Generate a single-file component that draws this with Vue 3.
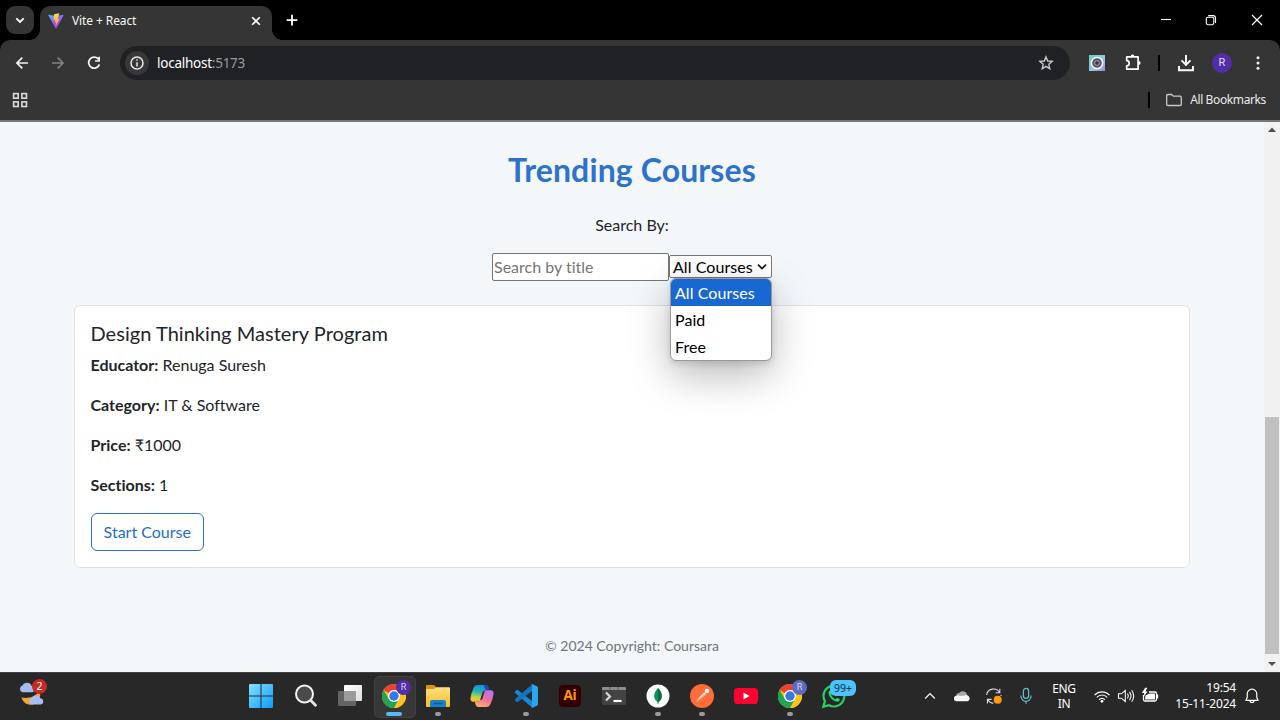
<script setup>
const options = ['All Courses', 'Paid', 'Free']
const details = [
  { label: 'Educator:', value: 'Renuga Suresh' },
  { label: 'Category:', value: 'IT & Software' },
  { label: 'Price:', value: '₹1000' },
  { label: 'Sections:', value: '1' }
]
</script>

<template>
  <div class="screen">
    <header class="browser">
      <div class="tabstrip">
        <div class="tabsearch">
          <svg width="28" height="28" viewBox="0 0 28 28"><path d="M10.3 12.3l3.7 3.6 3.7-3.6" fill="none" stroke="#fff" stroke-width="1.8" /></svg>
        </div>
        <div class="tab">
          <svg class="vite" width="16" height="16" viewBox="0 0 16 16">
            <defs>
              <linearGradient id="vg" x1="0" y1="0" x2=".6" y2="1"><stop offset="0" stop-color="#41c8ff" /><stop offset=".45" stop-color="#8b6cff" /><stop offset="1" stop-color="#b72be8" /></linearGradient>
              <linearGradient id="vb" x1="0" y1="0" x2="0" y2="1"><stop offset="0" stop-color="#ffdf4a" /><stop offset="1" stop-color="#ff9d10" /></linearGradient>
            </defs>
            <path d="M.1 1.7L8 3.1l7.9-1.4L8.4 15.4q-.4.6-.8 0z" fill="url(#vg)" />
            <path d="M11.3.2L6 1.2 5.6 7.2l1.8-.4-.5 2.7 1.3-.4-.7 4.4 3.9-7.5-1.8.3z" fill="url(#vb)" />
          </svg>
          <span class="tabtitle">Vite + React</span>
          <svg class="tabclose" width="16" height="16" viewBox="0 0 16 16"><path d="M4.2 4.2l7.6 7.6M11.8 4.2l-7.6 7.6" stroke="#fff" stroke-width="1.6" /></svg>
        </div>
        <div class="newtab">
          <svg width="20" height="20" viewBox="0 0 20 20"><path d="M10 4.8v10.6M4.7 10.1h10.6" stroke="#fff" stroke-width="1.8" /></svg>
        </div>
        <div class="wincontrols">
          <svg width="46" height="40" viewBox="0 0 46 40"><path d="M19 19.5h10" stroke="#fff" stroke-width="1.1" /></svg>
          <svg width="46" height="40" viewBox="0 0 46 40"><g fill="none" stroke="#fff" stroke-width="1.1"><rect x="18.3" y="17.2" width="7.5" height="7.5" rx="1.6" /><path d="M20.2 15.6h4.9a2.4 2.4 0 012.4 2.4v5" /></g></svg>
          <svg width="46" height="40" viewBox="0 0 46 40"><path d="M18 15l10 10M28 15L18 25" stroke="#fff" stroke-width="1.2" /></svg>
        </div>
      </div>

      <div class="toolbar">
        <div class="cell"><svg width="20" height="20" viewBox="0 0 20 20"><path d="M16 10H4.9M10.3 4.6L4.9 10l5.4 5.4" fill="none" stroke="#f1f1f1" stroke-width="1.7" /></svg></div>
        <div class="cell"><svg width="20" height="20" viewBox="0 0 20 20"><path d="M4 10h11.1M9.7 4.6l5.4 5.4-5.4 5.4" fill="none" stroke="#858585" stroke-width="1.5" /></svg></div>
        <div class="cell"><svg width="20" height="20" viewBox="0 0 20 20"><path d="M14.7 6.5A5.5 5.5 0 1015.4 11.4" fill="none" stroke="#f1f1f1" stroke-width="1.8" /><path d="M16 3.8v5h-5V7.2h3.2V3.8z" fill="#f1f1f1" /></svg></div>
        <div class="omnibox">
          <div class="info"><svg width="24" height="24" viewBox="0 0 24 24"><circle cx="12" cy="12" r="6" fill="none" stroke="#e8e8e8" stroke-width="1.5" /><path d="M12 11.2v4.2M12 8.3v1.5" stroke="#e8e8e8" stroke-width="1.5" /></svg></div>
          <span class="url">localhost<span class="port">:5173</span></span>
          <svg class="star" width="20" height="20" viewBox="0 0 20 20"><path d="M10 3.9l1.7 4.1 4.5.4-3.4 2.900 1 4.400-3.800-2.300-3.800 2.300 1-4.400-3.400-2.900 4.500-.4z" fill="none" stroke="#c9c9c9" stroke-width="1.4" /></svg>
        </div>
        <div class="cell">
          <svg width="16" height="16" viewBox="0 0 16 16">
            <defs><linearGradient id="eg" x1="0" y1="0" x2="1" y2="1"><stop offset="0" stop-color="#68cfb8" /><stop offset=".55" stop-color="#8fc9dc" /><stop offset="1" stop-color="#9a8ce8" /></linearGradient></defs>
            <rect width="16" height="16" fill="url(#eg)" /><circle cx="8" cy="8" r="6.3" fill="#fff" /><circle cx="8" cy="8" r="4.8" fill="#58546c" /><circle cx="8" cy="8" r="3.1" fill="#88829f" /><circle cx="8" cy="8" r="1.7" fill="#38334c" />
          </svg>
        </div>
        <div class="cell"><svg width="20" height="20" viewBox="0 0 20 20"><path d="M4.100 3.900H15.100V16.200H3.700V12.900c3.400-.1 3.400-5 0-5.200V4.100z" fill="none" stroke="#fff" stroke-width="1.7" stroke-linejoin="round" /><path d="M7.600 3.400a1.900 1.900 0 013.800 0zM15.500 7.900a2.100 2.100 0 010 4.200z" fill="#fff" /></svg></div>
        <span class="divider tooldivider"></span>
        <div class="cell"><svg width="20" height="20" viewBox="0 0 20 20"><path d="M10 2v9.6M5.5 7.4L10 11.8l4.5-4.4M3 13v4.3h14V13" fill="none" stroke="#fff" stroke-width="1.9" /></svg></div>
        <div class="cell"><span class="avatar">R</span></div>
        <div class="cell"><svg width="20" height="20" viewBox="0 0 20 20"><g fill="#f1f1f1"><circle cx="10" cy="4.8" r="1.5" /><circle cx="10" cy="10" r="1.5" /><circle cx="10" cy="15.2" r="1.5" /></g></svg></div>
      </div>

      <div class="bookmarks">
        <svg width="16" height="16" viewBox="0 0 16 16"><g fill="none" stroke="#d9dedb" stroke-width="1.6"><rect x="1.6" y="1.6" width="4.600" height="4.600" /><rect x="9.9" y="1.6" width="4.600" height="4.600" /><rect x="1.6" y="9.9" width="4.600" height="4.600" /><rect x="9.9" y="9.9" width="4.600" height="4.600" /></g></svg>
        <span class="divider bookdivider"></span>
        <svg width="16" height="16" viewBox="0 0 16 16"><path d="M1.9 2.5h3.8l1.6 1.7h6.8q1.2 0 1.2 1.2v6.9q0 1.2-1.2 1.2H1.9Q.7 13.5.7 12.3V3.7q0-1.2 1.2-1.2z" fill="none" stroke="#c7c7c7" stroke-width="1.3" /></svg>
        <span class="booktext">All Bookmarks</span>
      </div>
    </header>

    <div class="viewport">
      <main class="page">
        <h2>Trending Courses</h2>
        <p class="searchby">Search By:</p>
        <div class="filters">
          <div class="input">Search by title</div>
          <div class="select">
            <span>All Courses</span>
            <svg width="12" height="12" viewBox="0 0 12 12"><path d="M2 3.6l4 4 4-4" fill="none" stroke="#111" stroke-width="1.6" /></svg>
            <ul class="menu">
              <li v-for="(o, i) in options" :key="o" :class="{ active: i === 0 }">{{ o }}</li>
            </ul>
          </div>
        </div>
        <section class="card">
          <h5>Design Thinking Mastery Program</h5>
          <p v-for="d in details" :key="d.label"><strong>{{ d.label }}</strong> {{ d.value }}</p>
          <div class="btn">Start Course</div>
        </section>
        <footer>© 2024 Copyright: Coursara</footer>
      </main>
      <aside class="scrollbar">
        <svg width="16" height="17" viewBox="0 0 16 17"><path d="M4 10l4-4.5 4 4.5z" fill="#505050" /></svg>
        <div class="track"><div class="thumb"></div></div>
        <svg width="16" height="17" viewBox="0 0 16 17"><path d="M4 7l4 4 4-4z" fill="#505050" /></svg>
      </aside>
    </div>

    <div class="taskbar">
      <div class="weather">
        <svg width="30" height="32" viewBox="0 0 30 32">
          <path d="M2.5 18.5c6 1.5 15-.5 17.5-7 3.8 7-2 14.8-9 14.3-4.500-.4-7-3-8.500-7.300z" fill="#f6a13a" />
          <path d="M3.500 13.200a3.400 3.400 0 010-6.600 4.900 4.900 0 019 .2 3.300 3.300 0 011 6.400z" fill="#a8bbef" />
          <path d="M12.500 25.500a3.400 3.400 0 01.2-6.500 4.500 4.500 0 018.300.2 3.200 3.200 0 01.8 6.300z" fill="#a6c0f4" />
        </svg>
        <span class="badge">2</span>
      </div>

      <div class="apps">
        <div class="app start">
          <svg width="24" height="24" viewBox="0 0 24 24">
            <defs><linearGradient id="wg" gradientUnits="userSpaceOnUse" x1="0" y1="0" x2="24" y2="24"><stop offset="0" stop-color="#85e2ff" /><stop offset="1" stop-color="#0a9bff" /></linearGradient></defs>
            <path d="M0 1q0-1 1-1h10.500v11.500H0zM12.500 0H23q1 0 1 1v10.500H12.500zM0 12.500h11.500V24H1q-1 0-1-1zM12.500 12.500H24V23q0 1-1 1H12.500z" fill="url(#wg)" />
          </svg>
        </div>
        <div class="app">
          <svg width="24" height="24" viewBox="0 0 24 24"><circle cx="10.500" cy="10" r="8.500" fill="#4a4a4a" stroke="#f3f3f3" stroke-width="2" /><path d="M16.800 16.500l4.700 4.800" stroke="#e0e5e8" stroke-width="2.800" stroke-linecap="round" /></svg>
        </div>
        <div class="app">
          <svg width="24" height="24" viewBox="0 0 24 24">
            <defs><linearGradient id="tg" x1="0" y1="0" x2="1" y2="1"><stop offset="0" stop-color="#fff" /><stop offset="1" stop-color="#dedede" /></linearGradient></defs>
            <rect x="6" y="1" width="18" height="16" rx="1" fill="url(#tg)" /><rect x="0" y="7" width="18" height="15" rx="1" fill="#6a6a6a" fill-opacity=".9" /><rect x="6" y="7" width="12" height="10" fill="#9b9b9b" />
          </svg>
        </div>
        <div class="app focused">
          <svg width="24" height="24" viewBox="0 0 24 24">
            <g id="chrome-logo"><circle cx="12" cy="12" r="12" fill="#fbbc16" /><path d="M12 12L1.600 6A12 12 0 0122.400 6H12z" fill="#ea4335" /><path d="M1.600 6A12 12 0 0012 24l5.200-9L12 18 6.800 15z" fill="#22a452" /><path d="M22.400 6A12 12 0 0112 24l5.200-9L18 12 12 6z" fill="#fcc31e" /><circle cx="12" cy="12" r="6" fill="#fff" /><circle cx="12" cy="12" r="4.700" fill="#3478e5" /></g>
          </svg>
          <span class="profile">R</span><i class="indicator wide"></i>
        </div>
        <div class="app">
          <svg width="24" height="24" viewBox="0 0 24 24">
            <defs><linearGradient id="fg" x1="0" y1="0" x2="0" y2="1"><stop offset="0" stop-color="#ffe181" /><stop offset="1" stop-color="#f7bd27" /></linearGradient></defs>
            <path d="M0 2q0-1 1-1h7l2.500 2.500V8H0z" fill="#d99415" /><path d="M1 5h7l2.500-1.700H23q1 0 1 1V22q0 1-1 1H1q-1 0-1-1V6q0-1 1-1z" fill="url(#fg)" /><path d="M4 23v-5q0-2 2-2h12q2 0 2 2v5z" fill="#1482cf" /><path d="M8 19.500h8" stroke="#0b5b9b" stroke-width="1.500" stroke-linecap="round" />
          </svg><i class="indicator"></i>
        </div>
        <div class="app">
          <svg width="24" height="24" viewBox="0 0 24 24">
            <defs>
              <linearGradient id="ca" x1=".5" y1="0" x2=".35" y2="1"><stop offset="0" stop-color="#168ce9" /><stop offset=".4" stop-color="#22b5b0" /><stop offset=".75" stop-color="#c6d341" /><stop offset="1" stop-color="#ffba30" /></linearGradient>
              <linearGradient id="cb" x1=".7" y1="0" x2=".3" y2="1"><stop offset="0" stop-color="#bc70f2" /><stop offset=".5" stop-color="#f1709f" /><stop offset="1" stop-color="#ffac66" /></linearGradient>
            </defs>
            <path d="M7.500 1h8.200q2 0 2.600 2l.8 3h-3.200q-1.500 0-2 1.700l-2.200 7.500q-.8 2.500-3.400 2.500H3.200Q0 17.700.5 13.800 1 9.500 3.500 4 4.700 1 7.500 1z" fill="url(#ca)" />
            <path d="M13.800 1h1.900q2 0 2.600 2l.8 3h-3.500z" fill="#1947b9" />
            <path d="M16.500 23H8.300q-2 0-2.600-2l-.8-3h3.200q1.500 0 2-1.700l2.200-7.500q.8-2.500 3.400-2.500h5.100Q24 6.300 23.500 10.200 23 14.500 20.500 20 19.300 23 16.500 23z" fill="url(#cb)" />
            <path d="M10.100 16.300l2.200-7.500q.6-2 2.600-2.400l-2.300 8.200q-.6 1.700-2.500 1.700z" fill="#37302f" />
          </svg>
        </div>
        <div class="app">
          <svg width="24" height="24" viewBox="0 0 24 24"><path d="M1.200 7.300l1.400-1.200q.6-.4 1.200 0L18 17v6.500L.9 8.700q-.5-.7.3-1.400z" fill="#1688d5" /><path d="M1.200 16.700l1.400 1.200q.6.400 1.200 0L18 7V.5L.9 15.300q-.5.700.3 1.400z" fill="#1175bd" /><path d="M17.300.2Q18 0 18.500.2l4.700 2.300q.8.400.8 1.300v16.400q0 .9-.8 1.300l-4.700 2.300q-.6.300-1.200 0 .7-.3.700-1.300V1.500q0-1-.7-1.300z" fill="#2ca5f0" /></svg><i class="indicator"></i>
        </div>
        <div class="app"><span class="ai">Ai</span></div>
        <div class="app">
          <svg width="24" height="24" viewBox="0 0 24 24"><rect y="3" width="24" height="18" rx="1" fill="#434343" /><path d="M0 6V4q0-1 1-1h22q1 0 1 1v2z" fill="#8d8d8d" /><path d="M8 3v3M16 3v3" stroke="#5b5b5b" /><path d="M4 8.500l4 4-4 4" fill="none" stroke="#d8d8d8" stroke-width="2.200" /><path d="M11.500 17h8" stroke="#fff" stroke-width="2.200" /></svg>
        </div>
        <div class="app">
          <svg width="24" height="24" viewBox="0 0 24 24"><circle cx="12" cy="12" r="11.500" fill="#fafafa" /><path d="M12 4c2.400 2.600 3.800 5.100 3.800 8 0 2.800-1.400 4.800-3.800 6.400C9.600 16.800 8.200 14.800 8.200 12c0-2.900 1.400-5.400 3.800-8z" fill="#10935a" /><path d="M12 4c2.400 2.600 3.800 5.100 3.800 8 0 2.800-1.400 4.800-3.800 6.400z" fill="#0b6f49" /><path d="M12 18v2" stroke="#51847a" /></svg><i class="indicator"></i>
        </div>
        <div class="app">
          <svg width="24" height="24" viewBox="0 0 24 24"><circle cx="12" cy="12" r="12" fill="#ff6c37" /><path d="M6 18.500l2.300-4.200 6-6 1.700 1.700-6.300 5.700z" fill="#fff1e9" /><path d="M5.800 18.700l8.300-8" stroke="#ff6c37" stroke-width=".6" /><circle cx="17" cy="7" r="2.200" fill="#fff" /></svg><i class="indicator"></i>
        </div>
        <div class="app">
          <svg width="24" height="24" viewBox="0 0 24 24"><rect y="4" width="24" height="16" rx="3.600" fill="#f03" /><path d="M9.500 8.500v7l6.200-3.500z" fill="#fff" /></svg>
        </div>
        <div class="app"><svg width="24" height="24" viewBox="0 0 24 24"><use href="#chrome-logo" /></svg><span class="profile light">R</span><i class="indicator"></i></div>
        <div class="app">
          <svg width="24" height="24" viewBox="0 0 24 24"><path d="M1.300 22.700l1.600-5.500a10.400 10.400 0 114.100 4z" fill="none" stroke="#28d366" stroke-width="2.200" /><path d="M8 6.500c-1.300.4-2 1.800-1.400 3.500 1.300 4 3.900 6.600 8 7.700 1.700.4 3.200-.6 3.300-2.400l-2.900-1.500-1.500 1.500c-2-.7-3.500-2.300-4.300-4.200l1.200-1.500z" fill="#28d366" /></svg>
          <span class="count">99+</span>
        </div>
      </div>

      <div class="tray">
        <svg width="12" height="12" viewBox="0 0 12 12"><path d="M1.200 8.500L6 3.700l4.800 4.800" fill="none" stroke="#fff" stroke-width="1.200" /></svg>
        <svg class="onedrive" width="16" height="16" viewBox="0 0 16 16"><path d="M2.200 9.800C1.500 7 3.300 5 5.200 5c2.200-3.200 7.300-2 8 1.800z" fill="#a9a9a9" /><path d="M2.700 13.200a2.700 2.700 0 01-.2-5.400c1.600-.8 3-.3 3.800.2l4.800-.7c1.600-1 4.600.7 4.600 3.300 0 1.500-1.100 2.600-2.600 2.600z" fill="#f7f7f7" /></svg>
        <svg class="sync" width="18" height="18" viewBox="0 0 18 18"><g fill="none" stroke="#ddd" stroke-width="1.100"><path d="M1.600 7.800a7 7 0 0113-2.200M14.800 1.700v4.100h-4.100M15.900 7.800l.2 1.200M8.500 16.200a7 7 0 01-5.700-3.500M2.400 16.500v-4.100h4.200" /></g><circle cx="12.700" cy="12.800" r="4" fill="#ff9b0b" /></svg>
        <svg class="mic" width="16" height="18" viewBox="0 0 16 18"><g fill="none" stroke="#68bdcc" stroke-width="1.200"><rect x="5.400" y="1.400" width="5.200" height="10" rx="2.600" /><path d="M3 8.500v.8a5 5 0 0010 0v-.8M8 14.300v2.500" /></g></svg>
        <div class="language"><span>ENG</span><span>IN</span></div>
        <svg class="wifi" width="18" height="18" viewBox="0 0 18 18"><g fill="none" stroke="#f5f5f5" stroke-width="1.200"><path d="M1.500 8.100c4.300-4.400 10.700-4.400 15 0M3.800 10.400c3-3.200 7.400-3.200 10.400 0M6.100 12.700c1.800-1.800 4-1.800 5.800 0" /></g><circle cx="9" cy="14.300" r="1.400" fill="#fff" /></svg>
        <svg class="speaker" width="18" height="18" viewBox="0 0 18 18"><g fill="none" stroke="#f5f5f5" stroke-width="1.100"><path d="M1.500 6.800h2.800L8.300 3.500v11L4.300 11.200H1.500zM10.400 6.600q1.700 2.400 0 4.800M12.500 4.900q3 4.100 0 8.200M14.700 3.300q4 5.700 0 11.400" /></g></svg>
        <svg class="battery" width="18" height="18" viewBox="0 0 18 18"><path d="M8 5h6q1.500 0 1.500 1.500v6q0 1.500-1.500 1.500H4q-1.500 0-1.500-1.500V8" fill="none" stroke="#fff" stroke-width="1.300" /><path d="M4.500 8.500L8.500 6.500h5.500v6H4z" fill="#fff" /><path d="M16 7.500h1.200v4H16z" fill="#fff" /><path d="M4.200.8L.8 6h2.500l-1 4L6.700 4.400H4.400L6.300.8z" fill="#fff" /></svg>
        <div class="clock"><span>19:54</span><span>15-11-2024</span></div>
        <svg class="bell" width="16" height="18" viewBox="0 0 16 18"><path d="M1.800 13.400l1.400-3V7a4.800 4.800 0 019.600 0v3.400l1.400 3zM6 13.600a2 2 0 004 0" fill="none" stroke="#fff" stroke-width="1.200" stroke-linejoin="round" /></svg>
      </div>
    </div>
  </div>
</template>

<style>
body { margin: 0; overflow: hidden; }
</style>

<style scoped>
.screen, .screen * { box-sizing: border-box; }
.screen { width: 1280px; height: 720px; display: flex; flex-direction: column; overflow: hidden; background: #000; font-family: "Noto Sans", sans-serif; }
svg { display: block; flex: none; }
span { white-space: nowrap; }

.browser { height: 122px; background: #000; flex: none; }
.tabstrip { height: 40px; display: flex; align-items: center; padding-left: 6px; }
.tabsearch { width: 28px; height: 28px; border-radius: 9px; background: #343434; }
.tab { position: relative; align-self: flex-end; width: 232px; height: 34px; margin-left: 6px; padding: 0 8px; border-radius: 10px 10px 0 0; background: #353535; display: flex; align-items: center; }
.tab::before, .tab::after { content: ""; position: absolute; bottom: 0; width: 10px; height: 10px; }
.tab::before { left: -10px; background: radial-gradient(circle at 0 0, transparent 9.5px, #353535 10px); }
.tab::after { right: -10px; background: radial-gradient(circle at 100% 0, transparent 9.5px, #353535 10px); }
.vite, .tabtitle, .tabclose { margin-bottom: 5px; }
.tabtitle { flex: 1; margin-left: 8px; font-size: 12px; line-height: 18px; color: #f5f5f5; letter-spacing: -.1px; }
.newtab { margin-left: 10px; }
.wincontrols { display: flex; margin-left: auto; }

.toolbar { height: 46px; padding: 0 4px; border-radius: 10px 10px 0 0; background: #353535; display: flex; align-items: center; }
.cell { width: 36px; height: 36px; flex: none; display: flex; align-items: center; justify-content: center; }
.omnibox { width: 950px; height: 34px; margin: 0 9px 0 8px; padding: 0 14px 0 5px; border-radius: 17px; background: #202124; display: flex; align-items: center; }
.info { width: 24px; height: 24px; border-radius: 50%; background: #383838; }
.url { flex: 1; margin-left: 8px; color: #fff; font-size: 13.5px; letter-spacing: -.25px; line-height: 20px; }
.port { color: #9a9a9a; }
.divider { width: 2px; height: 16px; background: #000; flex: none; }
.tooldivider { margin: 0 8px 0 7px; }
.avatar { width: 20px; height: 20px; border-radius: 50%; background: #512da8; color: #e5dcf7; font: 11px/20px Roboto, sans-serif; text-align: center; }
.bookmarks { height: 36px; padding: 0 14px 7px 12px; background: #353535; border-bottom: 2px solid #777; display: flex; align-items: center; }
.bookdivider { margin: 0 16px 0 auto; }
.booktext { margin-left: 8px; color: #eaeaea; font-size: 12px; letter-spacing: -.38px; }

.viewport { height: 550px; display: flex; flex: none; }
.page { width: 1264px; padding-top: 29px; background: #f4f7fa; font-family: Lato, sans-serif; font-size: 16px; line-height: 24px; color: #212529; display: flex; flex-direction: column; align-items: center; font-variant-ligatures: none; }
h2 { margin: 0; font-size: 32px; line-height: 38px; color: #2d72cb; font-weight: 700; letter-spacing: .12px; }
p { margin: 0 0 16px; }
.searchby { margin: 24px 0 16px; }
.filters { display: flex; align-items: center; height: 28px; }
.input { width: 177px; height: 28px; padding: 0 1px; border: 1px solid #767676; border-radius: 2px; background: #fff; color: #757575; line-height: 26px; }
.select { position: relative; width: 103px; height: 23px; margin-bottom: 1px; padding: 0 3px; border: 1px solid #777; border-radius: 2px; background: #fff; color: #000; display: flex; align-items: center; justify-content: space-between; letter-spacing: .06px; }
.select > span { padding-top: 1px; }
.menu { position: absolute; z-index: 2; top: 22px; left: 0; width: 102px; height: 83px; margin: 0; padding: 0; list-style: none; border: 1px solid #999; border-radius: 6px; overflow: hidden; background: #fff; box-shadow: 0 14px 40px rgba(0, 0, 0, .28), 0 3px 6px rgba(0, 0, 0, .12); }
.menu li { height: 27px; padding-left: 4px; line-height: 28px; }
.menu .active { color: #fff; background: #1967d2; }
.card { width: 1116px; height: 263px; margin-top: 24px; padding: 15px 15.5px; border: 1px solid #dfe1e4; border-radius: 6px; background: #fff; }
h5 { margin: 0 0 8px; font-size: 20px; font-weight: 400; line-height: 24px; letter-spacing: .04px; }
.btn { width: 113.5px; height: 38px; border: 1px solid #2872cf; border-radius: 6px; color: #1f6dcd; text-align: center; line-height: 36px; }
footer { margin-top: 66px; font-size: 14px; line-height: 24px; color: #6c757d; }
.scrollbar { width: 16px; background: #f1f1f1; display: flex; flex-direction: column; }
.track { flex: 1; padding-top: 278px; padding-left: 1px; padding-right: 1px; }
.thumb { height: 237px; background: #c1c1c1; }

.taskbar { height: 48px; background: #282829; border-top: 1px solid #414144; display: flex; align-items: flex-start; flex: none; color: #fff; }
.weather { position: relative; width: 40px; height: 47px; margin-left: 19px; padding-top: 6px; }
.badge { position: absolute; left: 13px; top: 6px; width: 15px; height: 15px; border-radius: 50%; background: #c52b22; color: #fff; font-size: 10.500px; line-height: 15px; text-align: center; }
.apps { display: flex; margin-left: 180px; }
.app { position: relative; width: 44px; height: 46px; display: flex; align-items: center; justify-content: center; }
.start { width: 45px; padding-right: 1px; }
.focused::before { content: ""; position: absolute; left: 2px; top: 3px; width: 40px; height: 40px; border: 1px solid #414141; border-radius: 5px; background: #373737; }
.app svg { position: relative; }
.profile { position: absolute; left: 24px; top: 7px; width: 15px; height: 15px; border-radius: 50%; background: #512da8; color: #ddd1f5; font: 9px/15px Roboto, sans-serif; text-align: center; }
.profile.light { background: #5c6bc0; }
.indicator { position: absolute; bottom: 3px; left: 19px; width: 6px; height: 4px; border-radius: 2px; background: #9b9b9b; }
.indicator.wide { left: 14px; width: 16px; background: #5bb9ef; }
.ai { width: 22px; height: 22px; border-radius: 4px; background: #330000; color: #ff9a00; font: 700 13.5px/21px "Open Sans", sans-serif; text-align: center; letter-spacing: -.3px; }
.count { position: absolute; left: 18px; top: 7px; width: 26px; height: 16px; border-radius: 6px; background: #4cc2ff; color: #102d3c; font-size: 10.500px; line-height: 16px; text-align: center; }
.tray { height: 46px; display: flex; align-items: center; margin-left: auto; padding-right: 20px; }
.onedrive { margin-left: 18px; }
.sync { margin-left: 15px; }
.mic { margin-left: 15px; }
.language { margin-left: 16px; width: 28px; display: flex; flex-direction: column; text-align: center; font-size: 12px; line-height: 15px; letter-spacing: -.3px; }
.wifi { margin-left: 15px; }
.speaker { margin-left: 6px; }
.battery { margin-left: 6px; }
.clock { width: 68px; margin-left: 9px; display: flex; flex-direction: column; text-align: right; font-size: 12px; line-height: 16px; letter-spacing: -.2px; }
.bell { margin-left: 8px; }
</style>
